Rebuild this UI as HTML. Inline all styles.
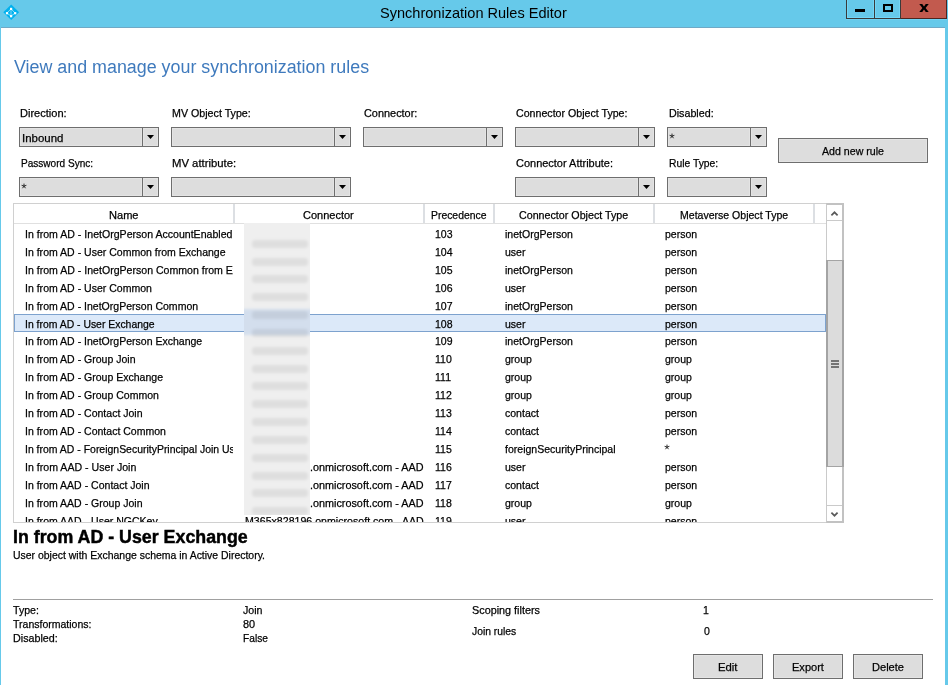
<!DOCTYPE html>
<html><head><meta charset="utf-8"><title>Synchronization Rules Editor</title>
<style>
html,body{margin:0;padding:0;width:948px;height:685px;overflow:hidden;background:#fff}
body{position:relative;font-family:"Liberation Sans", sans-serif}
.t{position:absolute;white-space:nowrap;transform-origin:0 0}
.s{-webkit-text-stroke:0.25px currentColor}
.b{-webkit-text-stroke:0.45px currentColor}
</style></head><body>
<div style="position:absolute;left:0px;top:0px;width:948px;height:685px;background:#66c9ea"></div>
<div style="position:absolute;left:1px;top:27px;width:944px;height:1px;background:#6fa9c6"></div>
<div style="position:absolute;left:1px;top:28px;width:944px;height:657px;background:#fff"></div>
<svg style="position:absolute;left:2px;top:3px" width="19" height="19" viewBox="0 0 19 19">
<path d="M9.2 1.5 L17.1 9.2 L9.2 16.9 L1.3 9.2 Z" fill="#00b1ee"/>
<path d="M9 5.8 L4.9 10.1 L9 13.1 L13.1 10.1 Z" fill="none" stroke="#9fe3fb" stroke-width="0.9"/>
<line x1="9" y1="7" x2="9" y2="12" stroke="#7fd6f6" stroke-width="1"/>
<rect x="8" y="4.8" width="2.2" height="2.2" fill="#fff"/>
<rect x="3.9" y="9.1" width="2.2" height="2.2" fill="#fff"/>
<rect x="12.1" y="9.1" width="2.2" height="2.2" fill="#fff"/>
<rect x="8" y="12.1" width="2.2" height="2.2" fill="#fff"/>
</svg>
<div class="t" style="left:379.83px;top:5px;font-size:15px;line-height:15px;color:#000;font-weight:normal;transform:scaleX(0.9696)">Synchronization Rules Editor</div>
<div style="position:absolute;left:846px;top:0px;width:29px;height:19px;background:#66c9ea;border:1px solid #3a3a3a;border-top:none;box-sizing:border-box"></div>
<div style="position:absolute;left:875px;top:0px;width:26px;height:19px;background:#66c9ea;border:1px solid #3a3a3a;border-top:none;border-left:none;box-sizing:border-box"></div>
<div style="position:absolute;left:901px;top:0px;width:46px;height:19px;background:#c25a4e;border:1px solid #4f2520;border-top:none;border-left:none;box-sizing:border-box"></div>
<div style="position:absolute;left:847px;top:0px;width:27px;height:18px;border:1px solid #74d6f6;border-top:none;box-sizing:border-box"></div>
<div style="position:absolute;left:875px;top:0px;width:25px;height:18px;border:1px solid #74d6f6;border-top:none;box-sizing:border-box"></div>
<div style="position:absolute;left:846px;top:19px;width:101px;height:1px;background:#6fd2f2"></div>
<div style="position:absolute;left:855px;top:9px;width:10px;height:3px;background:#000"></div>
<div style="position:absolute;left:883px;top:4px;width:10px;height:8px;border:2px solid #000;box-sizing:border-box"></div>
<svg style="position:absolute;left:919px;top:4px" width="10" height="8" viewBox="0 0 9.5 8">
<path d="M0 0 L3 0 L4.75 2.5 L6.5 0 L9.5 0 L6.35 4 L9.5 8 L6.5 8 L4.75 5.5 L3 8 L0 8 L3.15 4 Z" fill="#000"/>
</svg>
<div class="t" style="left:13.50px;top:58px;font-size:18px;line-height:18px;color:#3f7abd;font-weight:normal;transform:scaleX(0.9922)">View and manage your synchronization rules</div>
<div style="position:absolute;left:19px;top:127px;width:140px;height:20px;background:#dddddd;border:1px solid #6e6e6e;box-sizing:border-box"></div>
<div style="position:absolute;left:20px;top:128px;width:122px;height:18px;border:1px solid #e4e4e4;box-sizing:border-box"></div>
<div style="position:absolute;left:143px;top:128px;width:15px;height:18px;border:1px solid #e4e4e4;box-sizing:border-box"></div>
<div style="position:absolute;left:142px;top:127px;width:1px;height:20px;background:#6e6e6e"></div>
<svg style="position:absolute;left:147px;top:135px" width="7" height="4" viewBox="0 0 7 4"><path d="M0 0 L7 0 L3.5 4 Z" fill="#000"/></svg>
<div style="position:absolute;left:171px;top:127px;width:180px;height:20px;background:#dddddd;border:1px solid #6e6e6e;box-sizing:border-box"></div>
<div style="position:absolute;left:172px;top:128px;width:162px;height:18px;border:1px solid #e4e4e4;box-sizing:border-box"></div>
<div style="position:absolute;left:335px;top:128px;width:15px;height:18px;border:1px solid #e4e4e4;box-sizing:border-box"></div>
<div style="position:absolute;left:334px;top:127px;width:1px;height:20px;background:#6e6e6e"></div>
<svg style="position:absolute;left:339px;top:135px" width="7" height="4" viewBox="0 0 7 4"><path d="M0 0 L7 0 L3.5 4 Z" fill="#000"/></svg>
<div style="position:absolute;left:363px;top:127px;width:140px;height:20px;background:#dddddd;border:1px solid #6e6e6e;box-sizing:border-box"></div>
<div style="position:absolute;left:364px;top:128px;width:122px;height:18px;border:1px solid #e4e4e4;box-sizing:border-box"></div>
<div style="position:absolute;left:487px;top:128px;width:15px;height:18px;border:1px solid #e4e4e4;box-sizing:border-box"></div>
<div style="position:absolute;left:486px;top:127px;width:1px;height:20px;background:#6e6e6e"></div>
<svg style="position:absolute;left:491px;top:135px" width="7" height="4" viewBox="0 0 7 4"><path d="M0 0 L7 0 L3.5 4 Z" fill="#000"/></svg>
<div style="position:absolute;left:515px;top:127px;width:140px;height:20px;background:#dddddd;border:1px solid #6e6e6e;box-sizing:border-box"></div>
<div style="position:absolute;left:516px;top:128px;width:122px;height:18px;border:1px solid #e4e4e4;box-sizing:border-box"></div>
<div style="position:absolute;left:639px;top:128px;width:15px;height:18px;border:1px solid #e4e4e4;box-sizing:border-box"></div>
<div style="position:absolute;left:638px;top:127px;width:1px;height:20px;background:#6e6e6e"></div>
<svg style="position:absolute;left:643px;top:135px" width="7" height="4" viewBox="0 0 7 4"><path d="M0 0 L7 0 L3.5 4 Z" fill="#000"/></svg>
<div style="position:absolute;left:667px;top:127px;width:100px;height:20px;background:#dddddd;border:1px solid #6e6e6e;box-sizing:border-box"></div>
<div style="position:absolute;left:668px;top:128px;width:82px;height:18px;border:1px solid #e4e4e4;box-sizing:border-box"></div>
<div style="position:absolute;left:751px;top:128px;width:15px;height:18px;border:1px solid #e4e4e4;box-sizing:border-box"></div>
<div style="position:absolute;left:750px;top:127px;width:1px;height:20px;background:#6e6e6e"></div>
<svg style="position:absolute;left:755px;top:135px" width="7" height="4" viewBox="0 0 7 4"><path d="M0 0 L7 0 L3.5 4 Z" fill="#000"/></svg>
<div style="position:absolute;left:19px;top:177px;width:140px;height:20px;background:#dddddd;border:1px solid #6e6e6e;box-sizing:border-box"></div>
<div style="position:absolute;left:20px;top:178px;width:122px;height:18px;border:1px solid #e4e4e4;box-sizing:border-box"></div>
<div style="position:absolute;left:143px;top:178px;width:15px;height:18px;border:1px solid #e4e4e4;box-sizing:border-box"></div>
<div style="position:absolute;left:142px;top:177px;width:1px;height:20px;background:#6e6e6e"></div>
<svg style="position:absolute;left:147px;top:185px" width="7" height="4" viewBox="0 0 7 4"><path d="M0 0 L7 0 L3.5 4 Z" fill="#000"/></svg>
<div style="position:absolute;left:171px;top:177px;width:180px;height:20px;background:#dddddd;border:1px solid #6e6e6e;box-sizing:border-box"></div>
<div style="position:absolute;left:172px;top:178px;width:162px;height:18px;border:1px solid #e4e4e4;box-sizing:border-box"></div>
<div style="position:absolute;left:335px;top:178px;width:15px;height:18px;border:1px solid #e4e4e4;box-sizing:border-box"></div>
<div style="position:absolute;left:334px;top:177px;width:1px;height:20px;background:#6e6e6e"></div>
<svg style="position:absolute;left:339px;top:185px" width="7" height="4" viewBox="0 0 7 4"><path d="M0 0 L7 0 L3.5 4 Z" fill="#000"/></svg>
<div style="position:absolute;left:515px;top:177px;width:140px;height:20px;background:#dddddd;border:1px solid #6e6e6e;box-sizing:border-box"></div>
<div style="position:absolute;left:516px;top:178px;width:122px;height:18px;border:1px solid #e4e4e4;box-sizing:border-box"></div>
<div style="position:absolute;left:639px;top:178px;width:15px;height:18px;border:1px solid #e4e4e4;box-sizing:border-box"></div>
<div style="position:absolute;left:638px;top:177px;width:1px;height:20px;background:#6e6e6e"></div>
<svg style="position:absolute;left:643px;top:185px" width="7" height="4" viewBox="0 0 7 4"><path d="M0 0 L7 0 L3.5 4 Z" fill="#000"/></svg>
<div style="position:absolute;left:667px;top:177px;width:100px;height:20px;background:#dddddd;border:1px solid #6e6e6e;box-sizing:border-box"></div>
<div style="position:absolute;left:668px;top:178px;width:82px;height:18px;border:1px solid #e4e4e4;box-sizing:border-box"></div>
<div style="position:absolute;left:751px;top:178px;width:15px;height:18px;border:1px solid #e4e4e4;box-sizing:border-box"></div>
<div style="position:absolute;left:750px;top:177px;width:1px;height:20px;background:#6e6e6e"></div>
<svg style="position:absolute;left:755px;top:185px" width="7" height="4" viewBox="0 0 7 4"><path d="M0 0 L7 0 L3.5 4 Z" fill="#000"/></svg>
<div class="t s" style="left:20.44px;top:108px;font-size:11.5px;line-height:11.5px;color:#000;font-weight:normal;transform:scaleX(0.9596)">Direction:</div>
<div class="t s" style="left:172.47px;top:108px;font-size:11.5px;line-height:11.5px;color:#000;font-weight:normal;transform:scaleX(0.9289)">MV Object Type:</div>
<div class="t s" style="left:364.45px;top:108px;font-size:11.5px;line-height:11.5px;color:#000;font-weight:normal;transform:scaleX(0.9481)">Connector:</div>
<div class="t s" style="left:516.48px;top:108px;font-size:11.5px;line-height:11.5px;color:#000;font-weight:normal;transform:scaleX(0.9244)">Connector Object Type:</div>
<div class="t s" style="left:668.87px;top:108px;font-size:11.5px;line-height:11.5px;color:#000;font-weight:normal;transform:scaleX(0.9304)">Disabled:</div>
<div class="t s" style="left:20.73px;top:158px;font-size:11.5px;line-height:11.5px;color:#000;font-weight:normal;transform:scaleX(0.8741)">Password Sync:</div>
<div class="t s" style="left:172.42px;top:158px;font-size:11.5px;line-height:11.5px;color:#000;font-weight:normal;transform:scaleX(0.9841)">MV attribute:</div>
<div class="t s" style="left:516.45px;top:158px;font-size:11.5px;line-height:11.5px;color:#000;font-weight:normal;transform:scaleX(0.9540)">Connector Attribute:</div>
<div class="t s" style="left:668.90px;top:158px;font-size:11.5px;line-height:11.5px;color:#000;font-weight:normal;transform:scaleX(0.8981)">Rule Type:</div>
<div class="t s" style="left:21.50px;top:133px;font-size:11.5px;line-height:11.5px;color:#000;font-weight:normal;transform:scaleX(0.9950)">Inbound</div>
<svg style="position:absolute;left:21.4px;top:183.3px" width="6" height="6" viewBox="-3 -3 6 6"><path d="M0 -2.4 L0 0.2 M-2.4 -0.7 L0 0.1 M2.4 -0.7 L0 0.1 M-1.5 2.2 L0 0.1 M1.5 2.2 L0 0.1" stroke="#222" stroke-width="0.95" fill="none"/></svg>
<svg style="position:absolute;left:669.4px;top:133.2px" width="6" height="6" viewBox="-3 -3 6 6"><path d="M0 -2.4 L0 0.2 M-2.4 -0.7 L0 0.1 M2.4 -0.7 L0 0.1 M-1.5 2.2 L0 0.1 M1.5 2.2 L0 0.1" stroke="#222" stroke-width="0.95" fill="none"/></svg>
<div style="position:absolute;left:778px;top:138px;width:150px;height:25px;background:#dddddd;border:1px solid #6e6e6e;box-sizing:border-box"></div>
<div style="position:absolute;left:779px;top:139px;width:148px;height:23px;border:1px solid #e4e4e4;box-sizing:border-box"></div>
<div class="t s" style="left:822.15px;top:146px;font-size:11.5px;line-height:11.5px;color:#000;font-weight:normal;transform:scaleX(0.9239)">Add new rule</div>
<div style="position:absolute;left:13px;top:203px;width:830px;height:320px;border:1px solid #d0d0d0;box-sizing:border-box;background:#fff"></div>
<div style="position:absolute;left:14px;top:223px;width:812px;height:1px;background:#e0e0e0"></div>
<div style="position:absolute;left:233px;top:204px;width:2px;height:19px;background:#dcdfe3"></div>
<div style="position:absolute;left:423px;top:204px;width:2px;height:19px;background:#dcdfe3"></div>
<div style="position:absolute;left:493px;top:204px;width:2px;height:19px;background:#dcdfe3"></div>
<div style="position:absolute;left:653px;top:204px;width:2px;height:19px;background:#dcdfe3"></div>
<div style="position:absolute;left:813px;top:204px;width:2px;height:19px;background:#dcdfe3"></div>
<div class="t s" style="left:109.49px;top:210px;font-size:11.5px;line-height:11.5px;color:#000;font-weight:normal;transform:scaleX(0.9621)">Name</div>
<div class="t s" style="left:303.19px;top:210px;font-size:11.5px;line-height:11.5px;color:#000;font-weight:normal;transform:scaleX(0.9558)">Connector</div>
<div class="t s" style="left:431.20px;top:210px;font-size:11.5px;line-height:11.5px;color:#000;font-weight:normal;transform:scaleX(0.9033)">Precedence</div>
<div class="t s" style="left:519.32px;top:210px;font-size:11.5px;line-height:11.5px;color:#000;font-weight:normal;transform:scaleX(0.9302)">Connector Object Type</div>
<div class="t s" style="left:679.78px;top:210px;font-size:11.5px;line-height:11.5px;color:#000;font-weight:normal;transform:scaleX(0.9162)">Metaverse Object Type</div>
<div style="position:absolute;left:0;top:224px;width:826px;height:298px;overflow:hidden">
<div style="position:absolute;left:0;top:0;width:233px;height:298px;overflow:hidden">
<div class="t s" style="left:24.68px;top:5px;font-size:11.5px;line-height:11.5px;color:#000;font-weight:normal;transform:scaleX(0.9192)">In from AD - InetOrgPerson AccountEnabled</div>
</div>
<div class="t s" style="left:434.88px;top:5px;font-size:11.5px;line-height:11.5px;color:#000;font-weight:normal;transform:scaleX(0.9150)">103</div>
<div class="t s" style="left:504.69px;top:5px;font-size:11.5px;line-height:11.5px;color:#000;font-weight:normal;transform:scaleX(0.9150)">inetOrgPerson</div>
<div class="t s" style="left:665.09px;top:5px;font-size:11.5px;line-height:11.5px;color:#000;font-weight:normal;transform:scaleX(0.9150)">person</div>
<div style="position:absolute;left:0;top:0;width:233px;height:298px;overflow:hidden">
<div class="t s" style="left:24.69px;top:23px;font-size:11.5px;line-height:11.5px;color:#000;font-weight:normal;transform:scaleX(0.9150)">In from AD - User Common from Exchange</div>
</div>
<div class="t s" style="left:434.88px;top:23px;font-size:11.5px;line-height:11.5px;color:#000;font-weight:normal;transform:scaleX(0.9150)">104</div>
<div class="t s" style="left:504.69px;top:23px;font-size:11.5px;line-height:11.5px;color:#000;font-weight:normal;transform:scaleX(0.9150)">user</div>
<div class="t s" style="left:665.09px;top:23px;font-size:11.5px;line-height:11.5px;color:#000;font-weight:normal;transform:scaleX(0.9150)">person</div>
<div style="position:absolute;left:0;top:0;width:233px;height:298px;overflow:hidden">
<div class="t s" style="left:24.68px;top:41px;font-size:11.5px;line-height:11.5px;color:#000;font-weight:normal;transform:scaleX(0.9187)">In from AD - InetOrgPerson Common from Exchange</div>
</div>
<div class="t s" style="left:434.88px;top:41px;font-size:11.5px;line-height:11.5px;color:#000;font-weight:normal;transform:scaleX(0.9150)">105</div>
<div class="t s" style="left:504.69px;top:41px;font-size:11.5px;line-height:11.5px;color:#000;font-weight:normal;transform:scaleX(0.9150)">inetOrgPerson</div>
<div class="t s" style="left:665.09px;top:41px;font-size:11.5px;line-height:11.5px;color:#000;font-weight:normal;transform:scaleX(0.9150)">person</div>
<div style="position:absolute;left:0;top:0;width:233px;height:298px;overflow:hidden">
<div class="t s" style="left:24.69px;top:59px;font-size:11.5px;line-height:11.5px;color:#000;font-weight:normal;transform:scaleX(0.9150)">In from AD - User Common</div>
</div>
<div class="t s" style="left:434.88px;top:59px;font-size:11.5px;line-height:11.5px;color:#000;font-weight:normal;transform:scaleX(0.9150)">106</div>
<div class="t s" style="left:504.69px;top:59px;font-size:11.5px;line-height:11.5px;color:#000;font-weight:normal;transform:scaleX(0.9150)">user</div>
<div class="t s" style="left:665.09px;top:59px;font-size:11.5px;line-height:11.5px;color:#000;font-weight:normal;transform:scaleX(0.9150)">person</div>
<div style="position:absolute;left:0;top:0;width:233px;height:298px;overflow:hidden">
<div class="t s" style="left:24.69px;top:77px;font-size:11.5px;line-height:11.5px;color:#000;font-weight:normal;transform:scaleX(0.9150)">In from AD - InetOrgPerson Common</div>
</div>
<div class="t s" style="left:434.88px;top:77px;font-size:11.5px;line-height:11.5px;color:#000;font-weight:normal;transform:scaleX(0.9150)">107</div>
<div class="t s" style="left:504.69px;top:77px;font-size:11.5px;line-height:11.5px;color:#000;font-weight:normal;transform:scaleX(0.9150)">inetOrgPerson</div>
<div class="t s" style="left:665.09px;top:77px;font-size:11.5px;line-height:11.5px;color:#000;font-weight:normal;transform:scaleX(0.9150)">person</div>
<div style="position:absolute;left:14px;top:90px;width:812px;height:18px;background:#dce9f9;border:1px solid #7da2ce;box-sizing:border-box"></div>
<div style="position:absolute;left:0;top:0;width:233px;height:298px;overflow:hidden">
<div class="t s" style="left:24.70px;top:95px;font-size:11.5px;line-height:11.5px;color:#000;font-weight:normal;transform:scaleX(0.9049)">In from AD - User Exchange</div>
</div>
<div class="t s" style="left:434.88px;top:95px;font-size:11.5px;line-height:11.5px;color:#000;font-weight:normal;transform:scaleX(0.9150)">108</div>
<div class="t s" style="left:504.69px;top:95px;font-size:11.5px;line-height:11.5px;color:#000;font-weight:normal;transform:scaleX(0.9150)">user</div>
<div class="t s" style="left:665.09px;top:95px;font-size:11.5px;line-height:11.5px;color:#000;font-weight:normal;transform:scaleX(0.9150)">person</div>
<div style="position:absolute;left:0;top:0;width:233px;height:298px;overflow:hidden">
<div class="t s" style="left:24.69px;top:112px;font-size:11.5px;line-height:11.5px;color:#000;font-weight:normal;transform:scaleX(0.9150)">In from AD - InetOrgPerson Exchange</div>
</div>
<div class="t s" style="left:434.88px;top:112px;font-size:11.5px;line-height:11.5px;color:#000;font-weight:normal;transform:scaleX(0.9150)">109</div>
<div class="t s" style="left:504.69px;top:112px;font-size:11.5px;line-height:11.5px;color:#000;font-weight:normal;transform:scaleX(0.9150)">inetOrgPerson</div>
<div class="t s" style="left:665.09px;top:112px;font-size:11.5px;line-height:11.5px;color:#000;font-weight:normal;transform:scaleX(0.9150)">person</div>
<div style="position:absolute;left:0;top:0;width:233px;height:298px;overflow:hidden">
<div class="t s" style="left:24.69px;top:130px;font-size:11.5px;line-height:11.5px;color:#000;font-weight:normal;transform:scaleX(0.9150)">In from AD - Group Join</div>
</div>
<div class="t s" style="left:434.88px;top:130px;font-size:11.5px;line-height:11.5px;color:#000;font-weight:normal;transform:scaleX(0.9150)">110</div>
<div class="t s" style="left:504.69px;top:130px;font-size:11.5px;line-height:11.5px;color:#000;font-weight:normal;transform:scaleX(0.9150)">group</div>
<div class="t s" style="left:665.09px;top:130px;font-size:11.5px;line-height:11.5px;color:#000;font-weight:normal;transform:scaleX(0.9150)">group</div>
<div style="position:absolute;left:0;top:0;width:233px;height:298px;overflow:hidden">
<div class="t s" style="left:24.69px;top:148px;font-size:11.5px;line-height:11.5px;color:#000;font-weight:normal;transform:scaleX(0.9150)">In from AD - Group Exchange</div>
</div>
<div class="t s" style="left:434.88px;top:148px;font-size:11.5px;line-height:11.5px;color:#000;font-weight:normal;transform:scaleX(0.9150)">111</div>
<div class="t s" style="left:504.69px;top:148px;font-size:11.5px;line-height:11.5px;color:#000;font-weight:normal;transform:scaleX(0.9150)">group</div>
<div class="t s" style="left:665.09px;top:148px;font-size:11.5px;line-height:11.5px;color:#000;font-weight:normal;transform:scaleX(0.9150)">group</div>
<div style="position:absolute;left:0;top:0;width:233px;height:298px;overflow:hidden">
<div class="t s" style="left:24.69px;top:166px;font-size:11.5px;line-height:11.5px;color:#000;font-weight:normal;transform:scaleX(0.9150)">In from AD - Group Common</div>
</div>
<div class="t s" style="left:434.88px;top:166px;font-size:11.5px;line-height:11.5px;color:#000;font-weight:normal;transform:scaleX(0.9150)">112</div>
<div class="t s" style="left:504.69px;top:166px;font-size:11.5px;line-height:11.5px;color:#000;font-weight:normal;transform:scaleX(0.9150)">group</div>
<div class="t s" style="left:665.09px;top:166px;font-size:11.5px;line-height:11.5px;color:#000;font-weight:normal;transform:scaleX(0.9150)">group</div>
<div style="position:absolute;left:0;top:0;width:233px;height:298px;overflow:hidden">
<div class="t s" style="left:24.69px;top:184px;font-size:11.5px;line-height:11.5px;color:#000;font-weight:normal;transform:scaleX(0.9150)">In from AD - Contact Join</div>
</div>
<div class="t s" style="left:434.88px;top:184px;font-size:11.5px;line-height:11.5px;color:#000;font-weight:normal;transform:scaleX(0.9150)">113</div>
<div class="t s" style="left:504.69px;top:184px;font-size:11.5px;line-height:11.5px;color:#000;font-weight:normal;transform:scaleX(0.9150)">contact</div>
<div class="t s" style="left:665.09px;top:184px;font-size:11.5px;line-height:11.5px;color:#000;font-weight:normal;transform:scaleX(0.9150)">person</div>
<div style="position:absolute;left:0;top:0;width:233px;height:298px;overflow:hidden">
<div class="t s" style="left:24.69px;top:202px;font-size:11.5px;line-height:11.5px;color:#000;font-weight:normal;transform:scaleX(0.9150)">In from AD - Contact Common</div>
</div>
<div class="t s" style="left:434.88px;top:202px;font-size:11.5px;line-height:11.5px;color:#000;font-weight:normal;transform:scaleX(0.9150)">114</div>
<div class="t s" style="left:504.69px;top:202px;font-size:11.5px;line-height:11.5px;color:#000;font-weight:normal;transform:scaleX(0.9150)">contact</div>
<div class="t s" style="left:665.09px;top:202px;font-size:11.5px;line-height:11.5px;color:#000;font-weight:normal;transform:scaleX(0.9150)">person</div>
<div style="position:absolute;left:0;top:0;width:233px;height:298px;overflow:hidden">
<div class="t s" style="left:24.69px;top:220px;font-size:11.5px;line-height:11.5px;color:#000;font-weight:normal;transform:scaleX(0.9092)">In from AD - ForeignSecurityPrincipal Join User</div>
</div>
<div class="t s" style="left:434.88px;top:220px;font-size:11.5px;line-height:11.5px;color:#000;font-weight:normal;transform:scaleX(0.9150)">115</div>
<div class="t s" style="left:504.69px;top:220px;font-size:11.5px;line-height:11.5px;color:#000;font-weight:normal;transform:scaleX(0.9150)">foreignSecurityPrincipal</div>
<svg style="position:absolute;left:664.4px;top:220.10000000000002px" width="6" height="6" viewBox="-3 -3 6 6"><path d="M0 -2.4 L0 0.2 M-2.4 -0.7 L0 0.1 M2.4 -0.7 L0 0.1 M-1.5 2.2 L0 0.1 M1.5 2.2 L0 0.1" stroke="#222" stroke-width="0.95" fill="none"/></svg>
<div style="position:absolute;left:0;top:0;width:233px;height:298px;overflow:hidden">
<div class="t s" style="left:24.68px;top:238px;font-size:11.5px;line-height:11.5px;color:#000;font-weight:normal;transform:scaleX(0.9218)">In from AAD - User Join</div>
</div>
<div class="t s" style="left:309.96px;top:238px;font-size:11.5px;line-height:11.5px;color:#000;font-weight:normal;transform:scaleX(0.9403)">.onmicrosoft.com - AAD</div>
<div class="t s" style="left:434.88px;top:238px;font-size:11.5px;line-height:11.5px;color:#000;font-weight:normal;transform:scaleX(0.9150)">116</div>
<div class="t s" style="left:504.69px;top:238px;font-size:11.5px;line-height:11.5px;color:#000;font-weight:normal;transform:scaleX(0.9150)">user</div>
<div class="t s" style="left:665.09px;top:238px;font-size:11.5px;line-height:11.5px;color:#000;font-weight:normal;transform:scaleX(0.9150)">person</div>
<div style="position:absolute;left:0;top:0;width:233px;height:298px;overflow:hidden">
<div class="t s" style="left:24.69px;top:256px;font-size:11.5px;line-height:11.5px;color:#000;font-weight:normal;transform:scaleX(0.9150)">In from AAD - Contact Join</div>
</div>
<div class="t s" style="left:309.96px;top:256px;font-size:11.5px;line-height:11.5px;color:#000;font-weight:normal;transform:scaleX(0.9403)">.onmicrosoft.com - AAD</div>
<div class="t s" style="left:434.88px;top:256px;font-size:11.5px;line-height:11.5px;color:#000;font-weight:normal;transform:scaleX(0.9150)">117</div>
<div class="t s" style="left:504.69px;top:256px;font-size:11.5px;line-height:11.5px;color:#000;font-weight:normal;transform:scaleX(0.9150)">contact</div>
<div class="t s" style="left:665.09px;top:256px;font-size:11.5px;line-height:11.5px;color:#000;font-weight:normal;transform:scaleX(0.9150)">person</div>
<div style="position:absolute;left:0;top:0;width:233px;height:298px;overflow:hidden">
<div class="t s" style="left:24.69px;top:274px;font-size:11.5px;line-height:11.5px;color:#000;font-weight:normal;transform:scaleX(0.9150)">In from AAD - Group Join</div>
</div>
<div class="t s" style="left:309.96px;top:274px;font-size:11.5px;line-height:11.5px;color:#000;font-weight:normal;transform:scaleX(0.9403)">.onmicrosoft.com - AAD</div>
<div class="t s" style="left:434.88px;top:274px;font-size:11.5px;line-height:11.5px;color:#000;font-weight:normal;transform:scaleX(0.9150)">118</div>
<div class="t s" style="left:504.69px;top:274px;font-size:11.5px;line-height:11.5px;color:#000;font-weight:normal;transform:scaleX(0.9150)">group</div>
<div class="t s" style="left:665.09px;top:274px;font-size:11.5px;line-height:11.5px;color:#000;font-weight:normal;transform:scaleX(0.9150)">group</div>
<div style="position:absolute;left:0;top:0;width:233px;height:298px;overflow:hidden">
<div class="t s" style="left:24.69px;top:292px;font-size:11.5px;line-height:11.5px;color:#000;font-weight:normal;transform:scaleX(0.9150)">In from AAD - User NGCKey</div>
</div>
<div class="t s" style="left:244.58px;top:292px;font-size:11.5px;line-height:11.5px;color:#000;font-weight:normal;transform:scaleX(0.9229)">M365x828196.onmicrosoft.com - AAD</div>
<div class="t s" style="left:434.88px;top:292px;font-size:11.5px;line-height:11.5px;color:#000;font-weight:normal;transform:scaleX(0.9150)">119</div>
<div class="t s" style="left:504.69px;top:292px;font-size:11.5px;line-height:11.5px;color:#000;font-weight:normal;transform:scaleX(0.9150)">user</div>
<div class="t s" style="left:665.09px;top:292px;font-size:11.5px;line-height:11.5px;color:#000;font-weight:normal;transform:scaleX(0.9150)">person</div>
</div>
<div style="position:absolute;left:244px;top:223px;width:66px;height:292px;overflow:hidden"><div style="position:absolute;left:-4px;top:-4px;width:74px;height:300px;background:#efefef;filter:blur(1.8px)"><div style="position:absolute;left:4px;top:4px;width:66px;height:292px"><div style="position:absolute;left:-4px;top:86px;width:74px;height:26px;background:#d3deed"></div><div style="position:absolute;left:8px;top:16.76px;width:56px;height:8px;background:rgba(0,0,0,0.07);border-radius:3px"></div><div style="position:absolute;left:8px;top:34.59px;width:56px;height:8px;background:rgba(0,0,0,0.07);border-radius:3px"></div><div style="position:absolute;left:8px;top:52.42px;width:56px;height:8px;background:rgba(0,0,0,0.07);border-radius:3px"></div><div style="position:absolute;left:8px;top:70.25px;width:56px;height:8px;background:rgba(0,0,0,0.07);border-radius:3px"></div><div style="position:absolute;left:8px;top:88.08px;width:56px;height:8px;background:rgba(0,0,0,0.07);border-radius:3px"></div><div style="position:absolute;left:8px;top:105.91px;width:56px;height:8px;background:rgba(0,0,0,0.07);border-radius:3px"></div><div style="position:absolute;left:8px;top:123.74px;width:56px;height:8px;background:rgba(0,0,0,0.07);border-radius:3px"></div><div style="position:absolute;left:8px;top:141.57px;width:56px;height:8px;background:rgba(0,0,0,0.07);border-radius:3px"></div><div style="position:absolute;left:8px;top:159.40px;width:56px;height:8px;background:rgba(0,0,0,0.07);border-radius:3px"></div><div style="position:absolute;left:8px;top:177.23px;width:56px;height:8px;background:rgba(0,0,0,0.07);border-radius:3px"></div><div style="position:absolute;left:8px;top:195.06px;width:56px;height:8px;background:rgba(0,0,0,0.07);border-radius:3px"></div><div style="position:absolute;left:8px;top:212.89px;width:56px;height:8px;background:rgba(0,0,0,0.07);border-radius:3px"></div><div style="position:absolute;left:8px;top:230.72px;width:56px;height:8px;background:rgba(0,0,0,0.07);border-radius:3px"></div><div style="position:absolute;left:8px;top:248.55px;width:56px;height:8px;background:rgba(0,0,0,0.07);border-radius:3px"></div><div style="position:absolute;left:8px;top:266.38px;width:56px;height:8px;background:rgba(0,0,0,0.07);border-radius:3px"></div><div style="position:absolute;left:8px;top:284.21px;width:56px;height:8px;background:rgba(0,0,0,0.07);border-radius:3px"></div></div></div></div>
<div style="position:absolute;left:826px;top:203px;width:18px;height:320px;border-top:2px solid #c2c2c2;border-right:2px solid #c2c2c2;border-bottom:2px solid #c2c2c2;border-left:1px solid #cacaca;box-sizing:border-box;background:#fff"></div>
<div style="position:absolute;left:827px;top:220px;width:15px;height:1px;background:#cacaca"></div>
<div style="position:absolute;left:827px;top:505px;width:15px;height:1px;background:#cacaca"></div>
<svg style="position:absolute;left:829px;top:209px" width="11" height="9" viewBox="0 0 11 9"><path d="M2.4 6.4 L5.5 3.3 L8.6 6.4" fill="none" stroke="#5a5a5a" stroke-width="1.7"/></svg>
<svg style="position:absolute;left:829px;top:510px" width="11" height="9" viewBox="0 0 11 9"><path d="M2.4 2.6 L5.5 5.7 L8.6 2.6" fill="none" stroke="#5a5a5a" stroke-width="1.7"/></svg>
<div style="position:absolute;left:826px;top:260px;width:18px;height:207px;background:#dcdcdc;border-left:2px solid #a4a4a4;border-right:2px solid #a4a4a4;border-top:1px solid #a4a4a4;border-bottom:1px solid #a4a4a4;box-sizing:border-box"></div>
<div style="position:absolute;left:831px;top:360px;width:8px;height:2px;background:#747474"></div>
<div style="position:absolute;left:831px;top:363px;width:8px;height:2px;background:#747474"></div>
<div style="position:absolute;left:831px;top:366px;width:8px;height:2px;background:#747474"></div>
<div class="t b" style="left:13.11px;top:528px;font-size:18px;line-height:18px;color:#000;font-weight:bold;transform:scaleX(0.9886)">In from AD - User Exchange</div>
<div class="t s" style="left:12.99px;top:550px;font-size:11.5px;line-height:11.5px;color:#000;font-weight:normal;transform:scaleX(0.9091)">User object with Exchange schema in Active Directory.</div>
<div style="position:absolute;left:13px;top:599px;width:920px;height:1px;background:#a0a0a0"></div>
<div class="t s" style="left:13.40px;top:605px;font-size:11.5px;line-height:11.5px;color:#000;font-weight:normal;transform:scaleX(0.9222)">Type:</div>
<div class="t s" style="left:13.40px;top:619px;font-size:11.5px;line-height:11.5px;color:#000;font-weight:normal;transform:scaleX(0.9141)">Transformations:</div>
<div class="t s" style="left:13.40px;top:633px;font-size:11.5px;line-height:11.5px;color:#000;font-weight:normal;transform:scaleX(0.9326)">Disabled:</div>
<div class="t s" style="left:243.20px;top:605px;font-size:11.5px;line-height:11.5px;color:#000;font-weight:normal;transform:scaleX(0.9238)">Join</div>
<div class="t s" style="left:243.20px;top:619px;font-size:11.5px;line-height:11.5px;color:#000;font-weight:normal;transform:scaleX(0.9462)">80</div>
<div class="t s" style="left:243.20px;top:633px;font-size:11.5px;line-height:11.5px;color:#000;font-weight:normal;transform:scaleX(0.8852)">False</div>
<div class="t s" style="left:472.26px;top:605px;font-size:11.5px;line-height:11.5px;color:#000;font-weight:normal;transform:scaleX(0.9408)">Scoping filters</div>
<div class="t s" style="left:472.30px;top:626px;font-size:11.5px;line-height:11.5px;color:#000;font-weight:normal;transform:scaleX(0.9000)">Join rules</div>
<div class="t s" style="left:703.09px;top:605px;font-size:11.5px;line-height:11.5px;color:#000;font-weight:normal;transform:scaleX(0.9150)">1</div>
<div class="t s" style="left:703.50px;top:626px;font-size:11.5px;line-height:11.5px;color:#000;font-weight:normal;transform:scaleX(0.9150)">0</div>
<div style="position:absolute;left:693px;top:654px;width:70px;height:25px;background:#dddddd;border:1px solid #6e6e6e;box-sizing:border-box"></div>
<div style="position:absolute;left:694px;top:655px;width:68px;height:23px;border:1px solid #e4e4e4;box-sizing:border-box"></div>
<div class="t s" style="left:717.97px;top:662px;font-size:11.5px;line-height:11.5px;color:#000;font-weight:normal;transform:scaleX(0.9842)">Edit</div>
<div style="position:absolute;left:773px;top:654px;width:70px;height:25px;background:#dddddd;border:1px solid #6e6e6e;box-sizing:border-box"></div>
<div style="position:absolute;left:774px;top:655px;width:68px;height:23px;border:1px solid #e4e4e4;box-sizing:border-box"></div>
<div class="t s" style="left:792.09px;top:662px;font-size:11.5px;line-height:11.5px;color:#000;font-weight:normal;transform:scaleX(0.9594)">Export</div>
<div style="position:absolute;left:853px;top:654px;width:70px;height:25px;background:#dddddd;border:1px solid #6e6e6e;box-sizing:border-box"></div>
<div style="position:absolute;left:854px;top:655px;width:68px;height:23px;border:1px solid #e4e4e4;box-sizing:border-box"></div>
<div class="t s" style="left:871.74px;top:662px;font-size:11.5px;line-height:11.5px;color:#000;font-weight:normal;transform:scaleX(0.9625)">Delete</div>
</body></html>
